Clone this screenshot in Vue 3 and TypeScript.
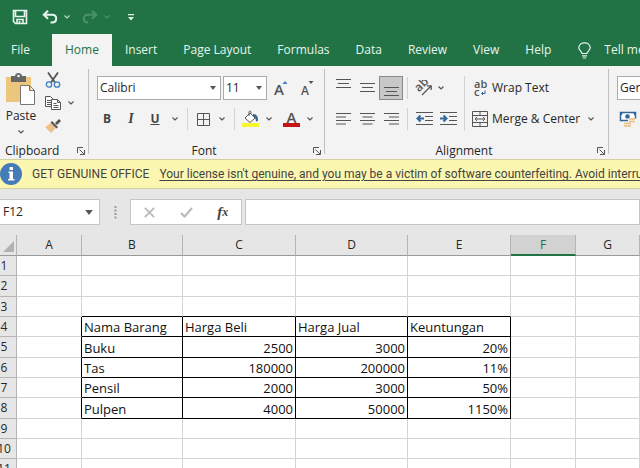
<script setup lang="ts">
import { ref } from 'vue'

interface Row {
  n: number
  cells: string[]
}

const tabs: string[] = ['File', 'Home', 'Insert', 'Page Layout', 'Formulas', 'Data', 'Review', 'View', 'Help']
const activeTab = ref('Home')
const cellRef = ref('F12')
const formula = ref('')
const columns: string[] = ['A', 'B', 'C', 'D', 'E', 'F', 'G']
const activeColumn = 'F'

const records: Record<number, string[]> = {
  4: ['Nama Barang', 'Harga Beli', 'Harga Jual', 'Keuntungan'],
  5: ['Buku', '2500', '3000', '20%'],
  6: ['Tas', '180000', '200000', '11%'],
  7: ['Pensil', '2000', '3000', '50%'],
  8: ['Pulpen', '4000', '50000', '1150%'],
}

const rows: Row[] = Array.from({ length: 11 }, (_, i) => {
  const n = i + 1
  return { n, cells: ['', ...(records[n] ?? ['', '', '', '']), '', ''] }
})

function cellClass(n: number, c: number): Record<string, boolean> {
  const inside = n >= 4 && n <= 8
  return {
    number: n > 4 && c > 1,
    right: inside && c >= 0 && c <= 4,
    bottom: n >= 3 && n <= 8 && c >= 1 && c <= 4,
  }
}
</script>

<template>
  <div class="excel">
    <header class="title">
      <button class="save" aria-label="Save">
        <svg width="16" height="16" viewBox="0 0 16 16" fill="none" stroke="#e8f5ec" stroke-width="1.6">
          <path d="M1.5 1.5h13v13h-11l-2-2zM3.5 1.5v6h9v-6M5 14.5v-4h6v4M7.5 12v2.5" />
        </svg>
      </button>
      <button class="undo" aria-label="Undo">
        <svg width="16" height="14" viewBox="0 0 16 14" fill="none" stroke="#e8f5ec" stroke-width="2">
          <path d="M6 .8 1.8 4.8 6 8.8M2 4.8h8c3 0 4.2 1.8 4.2 3.8 0 2.4-1.8 4-4.2 4H8.5" />
        </svg>
      </button>
      <button class="drop" aria-label="Undo history">
        <svg width="6" height="4" viewBox="0 0 6 4" fill="none" stroke="#b9dcc6" stroke-width="1.2"><path d="m.5.5 2.5 2.5L5.5.5" /></svg>
      </button>
      <button class="redo" aria-label="Redo">
        <svg width="16" height="14" viewBox="0 0 16 14" fill="none" stroke="#4a9268" stroke-width="2">
          <path d="m10 .8 4.2 4L10 8.800M14 4.800H6C3 4.800 1.800 6.600 1.800 8.600c0 2.400 1.800 4 4.200 4" />
        </svg>
      </button>
      <button class="drop" aria-label="Redo history">
        <svg width="6" height="4" viewBox="0 0 6 4" fill="none" stroke="#4a9268" stroke-width="1.2"><path d="m.5.5 2.5 2.5L5.5.5" /></svg>
      </button>
      <button class="custom" aria-label="Customize toolbar">
        <svg width="6" height="7" viewBox="0 0 6 7" fill="#e8f5ec"><path d="M0 0h6v1.3H0zM0 3h6L3 6.500z" /></svg>
      </button>
    </header>

    <nav class="tabs">
      <button v-for="t in tabs" :key="t" :class="{ active: t === activeTab }" @click="activeTab = t">{{ t }}</button>
      <button class="tell">
        <svg width="13" height="17" viewBox="0 0 13 17" fill="none" stroke="#e8f5ec" stroke-width="1.2">
          <path d="M4 11.500c0-2-3.200-3-3.200-6A5.500 5.500 0 0 1 6.500.8a5.500 5.500 0 0 1 5.700 4.700c0 3-3.200 4-3.200 6zM4 13.800h5M4.800 16h3.400" />
        </svg>
        <span>Tell me</span>
      </button>
    </nav>

    <section class="ribbon">
      <div class="group clipboard">
        <div class="tools">
          <button class="paste">
            <svg width="32" height="33" viewBox="0 0 32 33">
              <path fill="#ecc67c" d="M1 4h25v25H1z" />
              <path fill="#666" d="M6 3h4c0-4 7-4 7 0h4v6H6z" />
              <circle cx="13.5" cy="3" r="1.3" fill="#f3f3f3" />
              <path fill="#fff" stroke="#777" d="M15.5 12.500h9l5 5v14h-14zM24.500 12.500v5h5" />
            </svg>
            <span>Paste</span>
            <svg class="chev" viewBox="0 0 6 4"><path d="m.5.5 2.5 2.5L5.5.5" /></svg>
          </button>
          <div class="edit">
            <button aria-label="Cut">
              <svg width="16" height="16" viewBox="0 0 16 16" fill="none">
                <path stroke="#555" stroke-width="1.8" d="m3 .5 7 10M13 .5l-7 10" />
                <circle cx="4" cy="12.5" r="2.7" stroke="#3c7ebf" stroke-width="1.3" />
                <circle cx="12" cy="12.5" r="2.7" stroke="#3c7ebf" stroke-width="1.3" />
              </svg>
            </button>
            <button aria-label="Copy">
              <svg width="16" height="16" viewBox="0 0 16 16" fill="#fff" stroke="#555">
                <path d="M.5 1.500h5l2 2v8h-7zM2 5.500h4M2 7.500h4M2 9.500h4" />
                <path d="M6.500 4.500h6l3 3v7h-9zM12.500 4.500v3h3M8.500 8.500h3M8.500 10.500h5M8.500 12.500h5" />
              </svg>
              <svg class="chev" viewBox="0 0 6 4"><path d="m.5.5 2.5 2.5L5.5.5" /></svg>
            </button>
            <button aria-label="Format painter">
              <svg width="16" height="16" viewBox="0 0 16 16">
                <path fill="#efc18a" d="m6 5 5 5-5 5L0 9z" />
                <path fill="#555" d="m7 3 6 6-1.500 1.500-6-6zM10 5l4-4 2 2-4 4z" />
              </svg>
            </button>
          </div>
        </div>
        <div class="caption">
          <span>Clipboard</span>
          <svg class="launch" viewBox="0 0 8 8"><path d="M.5 6V.5H6M2.500 2.500l4.500 4.500M7.500 3v4.500H3" /></svg>
        </div>
      </div>

      <div class="group font">
        <div class="line boxes">
          <label class="combo family">
            <select aria-label="Font"><option>Calibri</option></select>
            <svg class="tri" viewBox="0 0 6 4"><path d="M0 0h6L3 4z" /></svg>
          </label>
          <label class="combo size">
            <select aria-label="Font size"><option>11</option></select>
            <svg class="tri" viewBox="0 0 6 4"><path d="M0 0h6L3 4z" /></svg>
          </label>
          <button class="w24" aria-label="Increase font size">
            <svg width="14" height="16" viewBox="0 0 14 16"><text class="glyph" x="0" y="15" font-size="15">A</text><path fill="#3c7ebf" d="M8.500 4h5L11 1z" /></svg>
          </button>
          <button class="w24" aria-label="Decrease font size">
            <svg width="14" height="16" viewBox="0 0 14 16"><text class="glyph" x="1" y="15" font-size="12">A</text><path fill="#555" d="M8.500 1h5L11 4z" /></svg>
          </button>
        </div>
        <div class="line">
          <button class="w24 bold">B</button>
          <button class="w24 italic">I</button>
          <button class="w24 under">U</button>
          <button class="w16" aria-label="Underline options"><svg class="chev" viewBox="0 0 6 4"><path d="m.5.5 2.5 2.5L5.5.5" /></svg></button>
          <i class="sep"></i>
          <button class="w22" aria-label="Borders"><svg width="13" height="13" viewBox="0 0 13 13" fill="none" stroke="#555"><path d="M.5.5h12v12H.5zM6.500.5v12M.5 6.500h12" /></svg></button>
          <button class="w16" aria-label="Border options"><svg class="chev" viewBox="0 0 6 4"><path d="m.5.5 2.5 2.5L5.5.5" /></svg></button>
          <i class="sep"></i>
          <button class="w22" aria-label="Fill colour">
            <svg width="17" height="18" viewBox="0 0 17 18" fill="none">
              <path fill="#fff" stroke="#555" d="m3 8 5-5 5 5-5 4.500zM7 6V2.500C7 .5 9 .5 9 2.500v1" />
              <path fill="#3b6793" d="M11 4c3 0 5.500 2 5 7l-2 .5C14 9 13 7 11 6z" />
              <path fill="#f7f62d" d="M0 13h17v4H0z" />
            </svg>
          </button>
          <button class="w16" aria-label="Fill options"><svg class="chev" viewBox="0 0 6 4"><path d="m.5.5 2.5 2.5L5.5.5" /></svg></button>
          <button class="w28" aria-label="Font colour">
            <svg width="17" height="18" viewBox="0 0 17 18"><text class="glyph" x="3.5" y="13" font-size="15">A</text><path fill="#c91414" d="M0 13h17v4H0z" /></svg>
          </button>
          <button class="w10" aria-label="Font colour options"><svg class="chev" viewBox="0 0 6 4"><path d="m.5.5 2.5 2.5L5.5.5" /></svg></button>
        </div>
        <div class="caption">
          <span>Font</span>
          <svg class="launch" viewBox="0 0 8 8"><path d="M.5 6V.5H6M2.500 2.500l4.500 4.500M7.500 3v4.500H3" /></svg>
        </div>
      </div>

      <div class="group align">
        <div class="tools">
          <div class="stack">
            <div class="line">
              <button class="w24 top" aria-label="Top align"><svg class="bars" viewBox="0 0 15 12"><path d="M0 1.500h15M2 5.500h11M0 9.500h15" /></svg></button>
              <button class="w24" aria-label="Middle align"><svg class="bars" viewBox="0 0 15 12"><path d="M0 1.500h15M2 5.500h11M0 9.500h15" /></svg></button>
              <button class="w24 low pressed" aria-label="Bottom align"><svg class="bars" viewBox="0 0 15 12"><path d="M0 1.500h15M2 5.500h11M0 9.500h15" /></svg></button>
              <i class="sep"></i>
              <button class="w24" aria-label="Orientation">
                <svg width="18" height="16" viewBox="0 0 18 16">
                  <text class="glyph" x="4" y="12.5" font-size="12" transform="rotate(-45 4 12.5)">ab</text>
                  <path fill="none" stroke="#555" stroke-width="1.3" d="m7 15 9-9M12 5.800h4.200V10" />
                </svg>
              </button>
              <button class="w10" aria-label="Orientation options"><svg class="chev" viewBox="0 0 6 4"><path d="m.5.5 2.5 2.5L5.5.5" /></svg></button>
            </div>
            <div class="line">
              <button class="w24" aria-label="Align left"><svg class="bars" viewBox="0 0 15 12"><path d="M0 .5h15M0 4h10M0 7.500h15M0 11h10" /></svg></button>
              <button class="w24" aria-label="Center"><svg class="bars" viewBox="0 0 15 12"><path d="M0 .5h15M2.500 4h10M0 7.500h15M2.500 11h10" /></svg></button>
              <button class="w24" aria-label="Align right"><svg class="bars" viewBox="0 0 15 12"><path d="M0 .5h15M5 4h10M0 7.500h15M5 11h10" /></svg></button>
              <i class="sep"></i>
              <button class="w24" aria-label="Decrease indent"><svg width="17" height="14" viewBox="0 0 17 14" fill="none"><path stroke="#555" d="M0 .5h17M9 4.500h8M9 8.500h8M0 12.500h17" /><path stroke="#33679c" stroke-width="2" d="M8 6.500H2M4.500 3.500l-3 3 3 3" /></svg></button>
              <button class="w24" aria-label="Increase indent"><svg width="17" height="14" viewBox="0 0 17 14" fill="none"><path stroke="#555" d="M0 .5h17M9 4.500h8M9 8.500h8M0 12.500h17" /><path stroke="#33679c" stroke-width="2" d="M0 6.500h6M3.500 3.500l3 3-3 3" /></svg></button>
            </div>
          </div>
          <i class="sep tall"></i>
          <div class="stack wide">
            <button class="named">
              <svg width="16" height="18" viewBox="0 0 16 18">
                <text class="glyph" x="2" y="9" font-size="11">ab</text>
                <text class="glyph" x="2" y="17" font-size="11">c</text>
                <path fill="none" stroke="#33679c" d="M13 11.500v3H9.500M11 13l-1.500 1.500L11 16" />
              </svg>
              <span>Wrap Text</span>
            </button>
            <button class="named">
              <svg width="16" height="16" viewBox="0 0 16 16" fill="none" stroke="#555">
                <path d="M.5.5h15v15H.5zM.5 4.500h15M.5 11.500h15M8 .5v4M8 11.500v4M3 8h10M5 6 3 8l2 2M11 6l2 2-2 2" />
              </svg>
              <span>Merge &amp; Center</span>
              <svg class="chev" viewBox="0 0 6 4"><path d="m.5.5 2.5 2.5L5.5.5" /></svg>
            </button>
          </div>
        </div>
        <div class="caption">
          <span>Alignment</span>
          <svg class="launch" viewBox="0 0 8 8"><path d="M.5 6V.5H6M2.500 2.500l4.500 4.500M7.500 3v4.500H3" /></svg>
        </div>
      </div>

      <div class="group numbers">
        <label class="combo">
          <select aria-label="Number format"><option>General</option></select>
        </label>
        <button class="money" aria-label="Accounting format">
          <svg width="18" height="17" viewBox="0 0 18 17" fill="none">
            <path fill="#fff" stroke="#33679c" stroke-width="1.5" d="M1.500 1.500h15v8h-15z" /><path fill="#33679c" d="M1 4.500c2 0 2.500-1 2.500-3H1zM17 4.500c-2 0-2.500-1-2.500-3H17z" />
            <circle cx="8.5" cy="5.5" r="2.3" fill="#33679c" />
            <path stroke="#f3f3f3" stroke-width="4" d="M5 13h8M9 9.500h9" /><path stroke="#ecbe78" stroke-width="1.5" d="M10 8h6M10 10.500h6M5 12.500h7M5 15h7" />
          </svg>
        </button>
      </div>
    </section>

    <div class="notice" role="status">
      <svg width="22" height="22" viewBox="0 0 22 22"><circle cx="11" cy="11" r="11" fill="#447bb8" /><path fill="#fff" d="M9.500 4h3.500v3H9.500zM8.500 8.500H13V16h1.500v1.500H8V16h1.500v-6h-1z" /></svg>
      <span>GET GENUINE OFFICE</span>
      <a href="#">Your license isn't genuine, and you may be a victim of software counterfeiting. Avoid interruption</a>
    </div>

    <div class="entry">
      <div class="name">
        <input v-model="cellRef" aria-label="Name box" />
        <svg class="tri" viewBox="0 0 6 4"><path d="M0 0h6L3 4z" /></svg>
      </div>
      <svg class="grip" width="3" height="13" viewBox="0 0 3 13" fill="#999"><path d="M.5 0h2v2h-2zM.5 3.500h2v2h-2zM.5 7h2v2h-2zM.5 10.500h2v2h-2z" /></svg>
      <div class="actions">
        <button aria-label="Cancel"><svg width="11" height="11" viewBox="0 0 11 11" fill="none" stroke="#bbb" stroke-width="1.8"><path d="m.8.8 9.400 9.400M10.200.8.8 10.200" /></svg></button>
        <button aria-label="Enter"><svg width="13" height="11" viewBox="0 0 13 11" fill="none" stroke="#bbb" stroke-width="2.2"><path d="m1 6 3.500 3.500L12 1" /></svg></button>
        <button class="fx" aria-label="Insert function">f<small>x</small></button>
      </div>
      <input v-model="formula" class="formula" aria-label="Formula" />
    </div>

    <table>
      <colgroup>
        <col class="c-head" /><col class="c-a" /><col class="c-b" /><col class="c-c" /><col class="c-d" /><col class="c-e" /><col class="c-a" /><col />
      </colgroup>
      <thead>
        <tr>
          <th class="corner"><svg width="11" height="11" viewBox="0 0 11 11" fill="#b2b2b2"><path d="M11 0v11H0z" /></svg></th>
          <th v-for="c in columns" :key="c" scope="col" :class="{ current: c === activeColumn }">{{ c }}</th>
        </tr>
      </thead>
      <tbody>
        <tr v-for="r in rows" :key="r.n">
          <th scope="row"><div>{{ r.n }}</div></th>
          <td v-for="(v, c) in r.cells" :key="c" :class="cellClass(r.n, c)">{{ v }}</td>
        </tr>
      </tbody>
    </table>
  </div>
</template>

<style>
body {
  background: #fff;
  overflow: hidden;
}
</style>

<style scoped>
.excel {
  height: 100vh;
  overflow: hidden;
  background: #fff;
  color: #262626;
  font: 12px/16px "Open Sans", "Noto Sans", sans-serif;
  white-space: nowrap;
}
.excel * { box-sizing: border-box; }
svg { display: block; flex: none; }
button {
  display: flex;
  align-items: center;
  justify-content: center;
  flex: none;
  padding: 0;
  border: 0;
  background: none;
  color: inherit;
  font: inherit;
}
input, select {
  min-width: 0;
  border: 0;
  outline: 0;
  background: none;
  color: inherit;
  font: inherit;
  appearance: none;
}
.chev { width: 6px; height: 4px; fill: none; stroke: #555; stroke-width: 1.2; }
.tri { width: 6px; height: 4px; fill: #555; }
.launch { width: 8px; height: 8px; fill: none; stroke: #555; }
.bars { width: 15px; height: 12px; fill: none; stroke: #555; }
.glyph { fill: #555; font-family: "Open Sans", sans-serif; font-weight: 600; }

.title {
  display: flex;
  align-items: center;
  height: 34px;
  padding-left: 12px;
  background: #217346;
}
.undo { margin-left: 14px; }
.drop { width: 18px; }
.redo { margin-left: 6px; }
.custom { margin-left: 12px; }

.tabs {
  display: flex;
  height: 32px;
  background: #217346;
  color: #e8f5ec;
}
.tabs button { padding: 0 13px; }
.tabs button:first-child { padding: 0 22px 0 11px; }
.tabs .active { background: #f3f3f3; color: #217346; }
.tabs .tell { gap: 13px; padding-left: 14px; }

.ribbon {
  display: flex;
  height: 93px;
  background: #f3f3f3;
}
.group {
  position: relative;
  display: flex;
  flex: none;
  flex-direction: column;
  gap: 7px;
  padding: 10px 0 0 6px;
}
.group:not(:last-child)::after {
  content: "";
  position: absolute;
  top: 3px;
  right: 0;
  bottom: 5px;
  border-right: 1px solid #c0c0c0;
}
.clipboard { width: 89px; padding: 6px 0 0 5px; }
.font { width: 236px; }
.align { width: 284px; }
.numbers { flex: 1 0 80px; padding-left: 8px; }
.tools { display: flex; }
.line { display: flex; align-items: center; height: 24px; }
.boxes { gap: 2px; padding-left: 2px; }
.caption {
  display: flex;
  align-items: center;
  justify-content: center;
  margin-top: auto;
  padding-right: 4px;
}
.caption span { flex: 1; text-align: center; }
.clipboard .caption span { text-align: left; }
.paste { flex-direction: column; gap: 1px; width: 32px; }
.paste span { line-height: 18px; }
.paste .chev { margin-top: 4px; }
.edit { display: flex; flex-direction: column; gap: 7px; padding-left: 8px; }
.edit button { gap: 7px; justify-content: flex-start; }
.w10 { width: 10px; }
.w16 { width: 16px; }
.w22 { width: 22px; }
.w24 { width: 24px; }
.w28 { width: 28px; }
.bold, .italic, .under { color: #444; font-weight: 700; }
.italic { font-family: "Liberation Serif", serif; font-size: 14px; font-style: italic; }
.under { text-decoration: underline; }
.sep { flex: none; width: 1px; height: 22px; margin: 0 4px; background: #d2d2d2; }
.sep.tall { height: 55px; }
.stack { display: flex; flex-direction: column; gap: 7px; width: 129px; }
.stack.wide { width: auto; }
.top { height: 24px; padding-bottom: 8px; }
.low { height: 24px; padding-top: 8px; }
.pressed { border: 1px solid #8a8a8a; background: #c8c8c8; }
.named { justify-content: flex-start; gap: 4px; height: 24px; padding-left: 3px; }
.named .chev { margin-left: 4px; }
.combo {
  display: flex;
  align-items: center;
  height: 24px;
  padding: 0 4px 0 2px;
  border: 1px solid #ababab;
  background: #fff;
}
.combo select { flex: 1; padding: 0; }
.family { width: 124px; }
.size { width: 44px; }
.money { align-self: flex-start; height: 24px; padding-left: 2px; }

.notice {
  display: flex;
  align-items: center;
  height: 30px;
  border: 1px solid #d3cfa0;
  border-width: 1px 0;
  background: #fbf7b0;
  color: #444;
  font-family: Roboto, "Open Sans", sans-serif;
}
.notice span { margin: 0 10px; }
.notice a { color: inherit; text-underline-offset: 2px; }

.entry {
  display: flex;
  align-items: center;
  height: 46px;
  background: #e6e6e6;
}
.name, .actions, .formula {
  display: flex;
  align-items: center;
  height: 26px;
  border: 1px solid #c6c6c6;
  background: #fff;
}
.name { width: 100px; padding-right: 6px; border-left: 0; }
.name input { flex: 1; padding: 0 3px; }
.name .tri { width: 8px; height: 5px; }
.grip { margin: 0 13px 0 14px; }
.actions { width: 112px; }
.actions button { flex: 1; }
.fx { color: #444; font: italic 700 15px/20px "Liberation Serif", serif; }
.fx small { font-size: 12px; }
.formula { flex: 1; margin-left: 3px; }

table {
  width: 100%;
  border-collapse: separate;
  border-spacing: 0;
  table-layout: fixed;
}
.c-head { width: 17px; }
.c-a { width: 65px; }
.c-b { width: 101px; }
.c-c { width: 113px; }
.c-d { width: 112px; }
.c-e { width: 103px; }
th, td {
  height: 20px;
  padding: 0;
  overflow: hidden;
  border-right: 1px solid #d4d4d4;
  border-bottom: 1px solid #d4d4d4;
  line-height: 18px;
}
th {
  border-color: #b5b5b5;
  background: #e6e6e6;
  font-weight: 400;
}
thead th { height: 21px; border-bottom-color: #999; }
thead .current { border-bottom: 2px solid #217346; background: #d2d2d2; color: #217346; }
.corner svg { margin: 3px 0 0 3px; }
tbody th div { display: flex; justify-content: center; width: 8px; }
tbody tr:nth-child(3n + 2) > * { height: 21px; }
td {
  padding: 1px 2px 0;
  color: #111;
  font-size: 13px;
}
.number { text-align: right; }
.right { border-right-color: #000; }
.bottom { border-bottom-color: #000; }
</style>
